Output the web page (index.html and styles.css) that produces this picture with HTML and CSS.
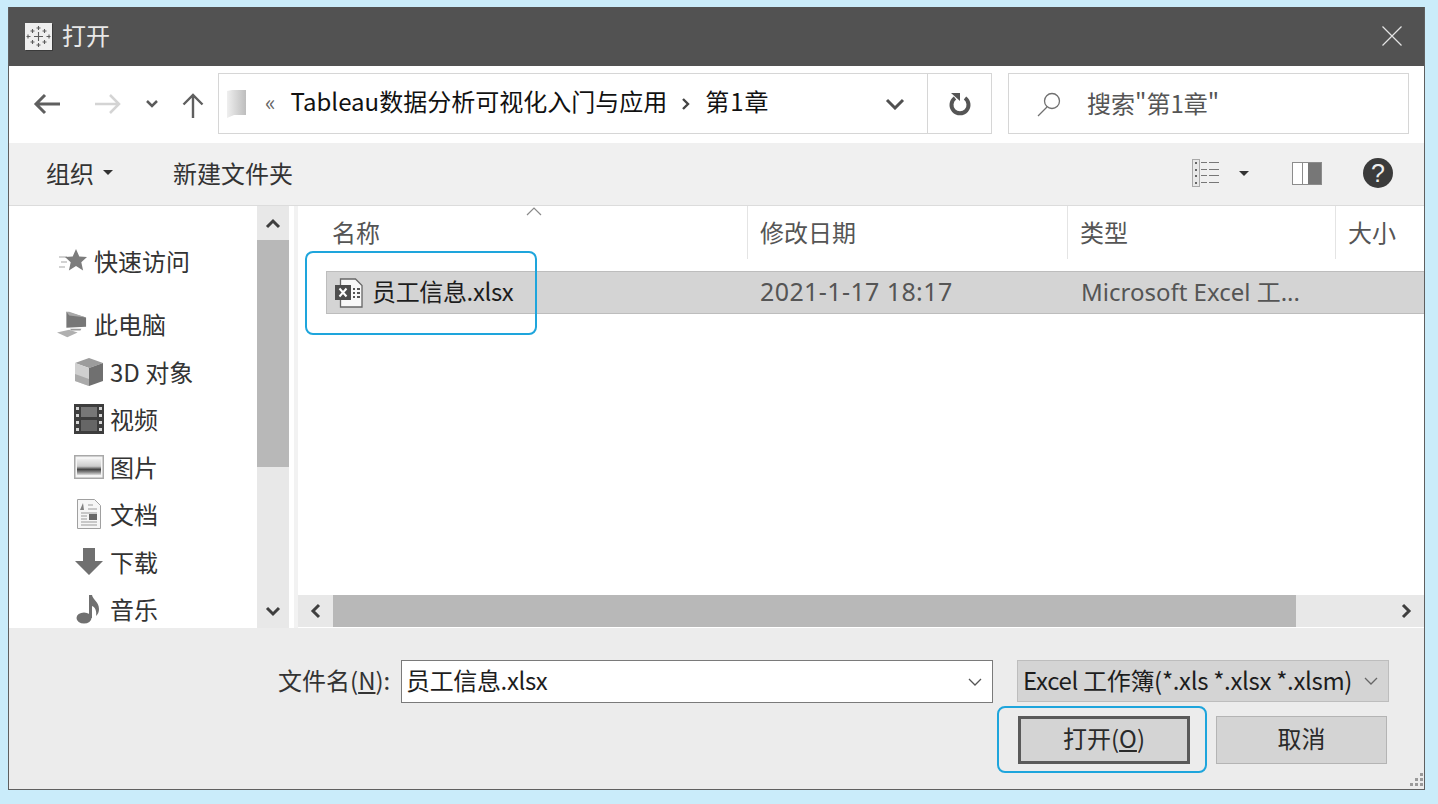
FILE: index.html
```html
<!DOCTYPE html>
<html lang="zh-CN">
<head>
<meta charset="utf-8">
<title>打开</title>
<link rel="stylesheet" href="styles.css">
</head>
<body>
<div class="dialog">
  <header class="titlebar">
    <div class="title-left">
      <span class="app-icon">
        <svg width="27" height="27" viewBox="0 0 27 27"><rect width="27" height="27" fill="#efefef"/><g stroke="#5c5c5c" stroke-width="1.100" fill="none"><path d="M13.500 9v9M9 13.500h9"/><path d="M13.500 3v4M11.500 5h4M13.500 20v4M11.500 22h4M3 11.500v4M1.500 13.500h4M24 11.500v4M21.500 13.500h4"/><path d="M7.500 6v4M5.500 8h4M19.500 6v4M17.500 8h4M7.500 17v4M5.500 19h4M19.500 17v4M17.500 19h4"/></g></svg>
      </span>
      <span class="title-text">打开</span>
    </div>
    <svg class="close" width="22" height="22" viewBox="0 0 22 22"><path d="M1.500 1.500l19 19M20.500 1.500l-19 19" stroke="#e4e4e4" stroke-width="1.200" fill="none"/></svg>
  </header>

  <div class="navbar">
    <div class="nav-buttons">
      <svg class="nav-back" width="28" height="22" viewBox="0 0 28 22"><path d="M27 11H3M12 2l-9 9 9 9" stroke="#5f5f5f" stroke-width="3" fill="none"/></svg>
      <svg class="nav-forward" width="28" height="22" viewBox="0 0 28 22"><path d="M1 11h24M16 2l9 9-9 9" stroke="#d4d4d4" stroke-width="2.500" fill="none"/></svg>
      <svg class="nav-drop" width="14" height="10" viewBox="0 0 14 10"><path d="M2 2l5 5 5-5" stroke="#5a5a5a" stroke-width="2.500" fill="none"/></svg>
      <svg class="nav-up" width="22" height="26" viewBox="0 0 22 26"><path d="M11 26V3M1.500 12.500L11 3l9.500 9.500" stroke="#5f5f5f" stroke-width="2.400" fill="none"/></svg>
    </div>
    <div class="address">
      <svg class="addr-folder" width="20" height="30" viewBox="0 0 20 30"><defs><linearGradient id="fg" x1="0" x2="1" y1="0" y2="0"><stop offset="0" stop-color="#efefef"/><stop offset="1" stop-color="#bdbdbd"/></linearGradient></defs><path d="M0 2l5-1h14v25H7l-7 3z" fill="url(#fg)"/></svg>
      <span class="addr-quote">«</span>
      <span class="addr-path">Tableau数据分析可视化入门与应用</span>
      <svg class="addr-sep" width="10" height="14" viewBox="0 0 10 14"><path d="M2 2l5 5-5 5" stroke="#444" stroke-width="2.400" fill="none"/></svg>
      <span class="addr-path addr-current">第1章</span>
      <span class="addr-fill"></span>
      <span class="addr-drop">
        <svg width="20" height="12" viewBox="0 0 20 12"><path d="M2 2l8 8 8-8" stroke="#505050" stroke-width="3" fill="none"/></svg>
      </span>
      <span class="addr-refresh">
        <svg width="24" height="26" viewBox="0 0 24 26"><path d="M7 7a8.500 8.500 0 1 0 10 0" stroke="#555" stroke-width="4" fill="none"/><path d="M3 2h9v8z" fill="#555"/></svg>
      </span>
    </div>
    <div class="search">
      <svg width="26" height="26" viewBox="0 0 26 26"><circle cx="16" cy="10" r="7.500" stroke="#707070" stroke-width="1.300" fill="none"/><path d="M11 16L2 25" stroke="#707070" stroke-width="1.300" fill="none"/></svg>
      <span class="search-text">搜索"第1章"</span>
    </div>
  </div>

  <div class="toolbar">
    <div class="tool-left">
      <span class="tool-org">组织<i class="caret"></i></span>
      <span class="tool-new">新建文件夹</span>
    </div>
    <div class="tool-right">
      <span class="view-btn">
        <svg width="28" height="28" viewBox="0 0 28 28"><rect x=".5" y=".5" width="7" height="27" fill="#e8e8e8" stroke="#a8a8a8"/><g fill="#666"><rect x="3" y="3" width="2" height="2"/><rect x="3" y="10" width="2" height="2"/><rect x="3" y="16" width="2" height="2"/><rect x="3" y="23" width="2" height="2"/></g><g stroke="#777" stroke-width="1.200"><path d="M9 3.500h6M17 3.500h10M9 10.500h6M17 10.500h10M9 16.500h6M17 16.500h10M9 23.500h6M17 23.500h10"/></g></svg>
        <i class="caret view-caret"></i>
      </span>
      <svg class="pane-btn" width="30" height="23" viewBox="0 0 30 23"><rect x=".5" y=".5" width="29" height="22" fill="#fff" stroke="#8c8c8c"/><rect x="16" y="1" width="13" height="21" fill="#777"/><path d="M10.500 1v21" stroke="#8c8c8c"/></svg>
      <span class="help">?</span>
    </div>
  </div>

  <div class="browser">
    <aside class="sidebar">
      <ul class="tree">
        <li class="tree-row tree-top tree-quick">
          <svg width="28" height="24" viewBox="0 0 28 24"><path d="M0 8h8M2 13h6M0 18h6" stroke="#c4c4c4" stroke-width="1.500"/><path d="M17 0l3.300 7.500 7.700.6-5.700 5.200 1.800 8.200-7.100-4.400-7.100 4.400 1.800-8.200L6 8.100l7.700-.6z" fill="#7c7c7c"/></svg>
          <span>快速访问</span>
        </li>
        <li class="tree-row tree-top tree-pc">
          <svg width="30" height="28" viewBox="0 0 32 28"><path d="M10 1l21 6v10l-21 1z" fill="#777"/><path d="M10 1l3 0 18 6-18-2z" fill="#a8a8a8"/><path d="M14 19h12l-1 2H15z" fill="#9a9a9a"/><path d="M0 23l13-3 9 3-11 5z" fill="#b0b0b0"/></svg>
          <span>此电脑</span>
        </li>
        <li class="tree-row tree-sub">
          <svg width="30" height="30" viewBox="0 0 30 30"><path d="M15 1L29 6 15 11 1 6z" fill="#9c9c9c"/><path d="M1 6l14 5v18L1 24z" fill="#d0d0d0"/><path d="M15 11l14-5v18l-14 5z" fill="#707070"/><path d="M1 17l14 5v7L1 24z" fill="#aaa"/></svg>
          <span>3D 对象</span>
        </li>
        <li class="tree-row tree-sub">
          <svg width="30" height="30" viewBox="0 0 30 30"><rect x="0" y="0" width="30" height="30" fill="#3d3d3d"/><g fill="#d6d6d6"><rect x="2" y="3" width="3" height="3"/><rect x="2" y="10" width="3" height="3"/><rect x="2" y="17" width="3" height="3"/><rect x="2" y="24" width="3" height="3"/><rect x="25" y="3" width="3" height="3"/><rect x="25" y="10" width="3" height="3"/><rect x="25" y="17" width="3" height="3"/><rect x="25" y="24" width="3" height="3"/></g><rect x="7" y="3" width="16" height="10" fill="#777"/><rect x="7" y="16" width="16" height="11" fill="#666"/></svg>
          <span>视频</span>
        </li>
        <li class="tree-row tree-sub">
          <svg width="30" height="24" viewBox="0 0 30 24"><defs><linearGradient id="pg" x1="0" x2="0" y1="0" y2="1"><stop offset="0" stop-color="#eee"/><stop offset=".45" stop-color="#ccc"/><stop offset=".65" stop-color="#444"/><stop offset=".82" stop-color="#888"/><stop offset="1" stop-color="#ddd"/></linearGradient></defs><rect x=".75" y=".75" width="28.500" height="22.500" fill="#f5f5f5" stroke="#a8a8a8" stroke-width="1.500"/><rect x="3" y="4" width="24" height="16" fill="url(#pg)"/></svg>
          <span>图片</span>
        </li>
        <li class="tree-row tree-sub">
          <svg width="30" height="30" viewBox="0 0 30 30"><path d="M3.500.5h17l6 6v23h-23z" fill="#f6f6f6" stroke="#a0a0a0"/><g stroke="#9a9a9a" stroke-width="1.200"><path d="M14 6h5M14 10h9M7 14h16M7 23h16M7 26h16M7 17h6M7 20h6"/></g><path d="M9 4L6 11h4z" fill="#808080"/><rect x="15" y="15" width="8" height="6" fill="#666"/></svg>
          <span>文档</span>
        </li>
        <li class="tree-row tree-sub">
          <svg width="30" height="30" viewBox="0 0 30 30"><path d="M9 1h12v13h8L15 28 1 14h8z" fill="#707070"/></svg>
          <span>下载</span>
        </li>
        <li class="tree-row tree-sub">
          <svg width="30" height="30" viewBox="0 0 30 30"><ellipse cx="10" cy="24" rx="7.500" ry="5.500" fill="#707070"/><path d="M15 1h3c1 5 7 7 7 14 0 3-1 5-3 7 1-5-1-9-4-10v12h-3z" fill="#707070"/></svg>
          <span>音乐</span>
        </li>
      </ul>
      <div class="vscroll">
        <span class="sb-btn"><svg width="16" height="11" viewBox="0 0 16 11"><path d="M2 9l6-6 6 6" stroke="#3f3f3f" stroke-width="3" fill="none"/></svg></span>
        <span class="vthumb"></span>
        <span class="vtrack"></span>
        <span class="sb-btn"><svg width="16" height="11" viewBox="0 0 16 11"><path d="M2 2l6 6 6-6" stroke="#3f3f3f" stroke-width="3" fill="none"/></svg></span>
      </div>
    </aside>

    <main class="files">
      <div class="file-area">
        <div class="columns">
          <span class="col col-name">名称
            <svg class="sort" width="16" height="9" viewBox="0 0 16 9"><path d="M1 8l7-7 7 7" stroke="#8a8a8a" stroke-width="1.200" fill="none"/></svg>
          </span>
          <span class="col col-date">修改日期</span>
          <span class="col col-type">类型</span>
          <span class="col col-size">大小</span>
        </div>
        <div class="file-row">
          <span class="cell-name">
            <svg width="28" height="30" viewBox="0 0 28 30"><path d="M5.500 1h15l6.500 6.500V29H5.500z" fill="#f8f8f8" stroke="#666" stroke-width="1.300"/><rect x="0" y="7" width="16" height="15" fill="#4d4d4d"/><path d="M4.500 10.500l7 8M11.500 10.500l-7 8" stroke="#fff" stroke-width="2"/><path d="M18 11h2M22 11h3M18 15h2M22 15h3M18 19h2M22 19h3" stroke="#555" stroke-width="2"/></svg>
            <span class="file-label">员工信息.xlsx</span>
          </span>
          <span class="cell-date">2021-1-17 18:17</span>
          <span class="cell-type">Microsoft Excel 工...</span>
        </div>
        <div class="highlight-file"></div>
      </div>
      <div class="hscroll">
        <span class="hbtn"><svg width="11" height="16" viewBox="0 0 11 16"><path d="M9 2L3 8l6 6" stroke="#3f3f3f" stroke-width="3" fill="none"/></svg></span>
        <span class="hthumb"></span>
        <span class="hbtn hbtn-right"><svg width="11" height="16" viewBox="0 0 11 16"><path d="M2 2l6 6-6 6" stroke="#3f3f3f" stroke-width="3" fill="none"/></svg></span>
      </div>
    </main>
  </div>

  <footer class="footer">
    <div class="name-row">
      <label class="name-label">文件名(<u>N</u>):</label>
      <div class="name-input">
        <span class="file-label">员工信息.xlsx</span>
        <svg width="14" height="8" viewBox="0 0 14 8"><path d="M1 1l6 6 6-6" stroke="#555" stroke-width="1.300" fill="none"/></svg>
      </div>
      <div class="type-select">
        <span class="type-text">Excel 工作簿(*.xls *.xlsx *.xlsm)</span>
        <svg width="14" height="8" viewBox="0 0 14 8"><path d="M1 1l6 6 6-6" stroke="#666" stroke-width="1.300" fill="none"/></svg>
      </div>
    </div>
    <div class="btn-row">
      <div class="open-wrap">
        <button class="btn btn-open">打开(<u>O</u>)</button>
      </div>
      <button class="btn btn-cancel">取消</button>
    </div>
    <svg class="grip" width="16" height="16" viewBox="0 0 16 16"><g fill="#9a9a9a"><rect x="12" y="1" width="3" height="3"/><rect x="7" y="6" width="3" height="3"/><rect x="12" y="6" width="3" height="3"/><rect x="2" y="11" width="3" height="3"/><rect x="7" y="11" width="3" height="3"/><rect x="12" y="11" width="3" height="3"/></g></svg>
  </footer>
</div>
</body>
</html>
```

FILE: styles.css
```css
* { box-sizing: border-box; }
html, body { height: 100%; }
body {
  margin: 0;
  background: #caecfa;
  padding: 7px 13px 14px 8px;
  font-family: "Noto Sans CJK SC", "Open Sans", sans-serif;
  overflow: hidden;
}
.dialog {
  position: relative;
  height: 783px;
  border: 1px solid #5f5f5f;
  border-top: 0;
  display: flex;
  flex-direction: column;
  background: #fff;
  color: #2a2a2a;
}
.titlebar {
  height: 59px;
  flex: none;
  background: #525252;
  display: flex;
  align-items: center;
  justify-content: space-between;
  padding: 0 21px 0 16px;
  color: #e8e8e8;
}
.title-left { display: flex; align-items: center; gap: 10px; padding-bottom: 1px; }
.app-icon { display: flex; box-shadow: 1px 1px 0 #3a3a3a; }
.title-text { font-size: 24px; line-height: 30px; padding-bottom: 3px; }
.close { margin-top: -1px; }

.navbar {
  height: 77px;
  flex: none;
  background: #fff;
  display: flex;
  align-items: flex-start;
  padding-top: 7px;
}
.nav-buttons {
  width: 209px;
  height: 61px;
  flex: none;
  display: flex;
  align-items: center;
  padding-left: 24px;
}
.nav-back { margin-right: 33px; }
.nav-forward { margin-right: 23px; }
.nav-drop { margin-right: 23px; }
.nav-up { margin-top: 2px; }
.address {
  width: 774px;
  height: 61px;
  flex: none;
  border: 1px solid #d6d6d6;
  display: flex;
  align-items: center;
  padding-left: 8px;
  color: #111;
}
.addr-folder { margin-right: 18px; }
.addr-quote { font-size: 22px; color: #666; margin-right: 15px; line-height: 1; padding-bottom: 6px; }
.addr-path { font-size: 24px; line-height: 32px; padding-bottom: 6px; }
.addr-current { letter-spacing: 1px; }
.addr-sep { margin: 0 14px; }
.addr-fill { flex: 1; }
.addr-drop {
  width: 64px;
  height: 100%;
  display: flex;
  align-items: center;
  justify-content: center;
}
.addr-refresh {
  width: 64px;
  height: 100%;
  border-left: 1px solid #d6d6d6;
  display: flex;
  align-items: center;
  justify-content: center;
}
.search {
  width: 401px;
  height: 61px;
  margin-left: 16px;
  flex: none;
  border: 1px solid #d6d6d6;
  display: flex;
  align-items: center;
  padding-left: 27px;
  gap: 25px;
  color: #555;
}
.search-text { font-size: 24px; padding-bottom: 3px; }

.toolbar {
  height: 63px;
  flex: none;
  background: #f0f0f0;
  border-bottom: 1px solid #dcdcdc;
  display: flex;
  align-items: center;
  justify-content: space-between;
  padding: 0 31px 0 37px;
}
.tool-left { display: flex; align-items: center; gap: 60px; font-size: 24px; color: #333; padding-bottom: 4px; }
.tool-org { display: flex; align-items: center; }
.caret {
  display: inline-block;
  width: 0; height: 0;
  margin-left: 9px;
  border-left: 5px solid transparent;
  border-right: 5px solid transparent;
  border-top: 5px solid #333;
}
.tool-right { display: flex; align-items: center; padding-bottom: 2px; }
.view-btn { display: flex; align-items: center; }
.view-caret { margin-left: 19px; margin-right: 43px; }
.help {
  width: 30px; height: 30px;
  margin-left: 41px;
  border-radius: 50%;
  background: #3b3b3b;
  color: #eee;
  font: 25px/30px "Liberation Sans", sans-serif;
  text-align: center;
}

.browser { height: 422px; flex: none; display: flex; background: #fff; }
.sidebar { width: 280px; flex: none; display: flex; }
.tree {
  list-style: none;
  margin: 0;
  padding: 0;
  flex: none;
  width: 248px;
  overflow: hidden;
  font-size: 24px;
  color: #333;
}
.tree-row { display: flex; align-items: center; height: 47.500px; }
.tree-row span { line-height: 32px; white-space: nowrap; }
.tree-top { padding-left: 50px; gap: 7px; }
.tree-top svg { width: 28px; }
.tree-quick { margin-top: 31px; }
.tree-pc { margin-top: 16px; }
.tree-pc svg { width: 30px; margin-left: -2px; }
.tree-sub { padding-left: 65px; gap: 6px; }
.tree-sub svg { width: 30px; flex: none; }
.vscroll {
  width: 32px;
  flex: none;
  display: flex;
  flex-direction: column;
  background: #e8e8e8;
}
.sb-btn { height: 34px; flex: none; display: flex; align-items: center; justify-content: center; }
.vthumb { height: 227px; flex: none; background: #b8b8b8; }
.vtrack { flex: 1; }

.files {
  flex: 1;
  min-width: 0;
  display: flex;
  flex-direction: column;
  border-left: 4px solid #f2f2f2;
  margin-left: 5px;
}
.file-area { position: relative; flex: 1; min-height: 0; }
.columns {
  height: 53px;
  display: flex;
  align-items: flex-end;
  font-size: 24px;
  color: #555;
}
.col { position: relative; display: block; height: 53px; padding-top: 10px; line-height: 32px; white-space: nowrap; padding-left: 12px; border-right: 1px solid #e4e4e4; }
.col-name { width: 450px; padding-left: 34px; }
.col-date { width: 320px; }
.col-type { width: 268px; }
.col-size { flex: 1; border-right: 0; overflow: hidden; }
.sort { position: absolute; left: 228px; top: 1px; }
.file-row {
  height: 43px;
  margin: 12px 0 0 28px;
  background: #d4d4d4;
  border: 1px solid #bdbdbd;
  border-right: 0;
  display: flex;
  align-items: center;
  font-size: 24px;
  color: #555;
}
.cell-name { width: 433px; display: flex; align-items: center; gap: 9px; padding-left: 8px; color: #1d1d1d; }
.cell-name span { line-height: 32px; padding-bottom: 3px; }
.file-label { letter-spacing: -.35px; }
.cell-date { width: 321px; font-family: "Noto Sans", "Noto Sans CJK SC", sans-serif; font-size: 25px; letter-spacing: .4px; padding-bottom: 3px; }
.cell-type { white-space: nowrap; font-family: "Noto Sans", "Noto Sans CJK SC", sans-serif; padding-bottom: 5px; }
.highlight-file {
  position: absolute;
  left: 7px;
  top: 45px;
  width: 232px;
  height: 84px;
  border: 2px solid #1ea5dc;
  border-radius: 8px;
}
.hscroll { height: 32px; flex: none; display: flex; background: #e8e8e8; margin-bottom: 1px; }
.hbtn { width: 35px; flex: none; display: flex; align-items: center; justify-content: center; }
.hbtn-right { width: 128px; justify-content: flex-end; padding-right: 12px; }
.hthumb { flex: 1; background: #b8b8b8; }

.footer {
  position: relative;
  flex: 1;
  background: #ececec;
  padding-top: 32px;
}
.name-row { display: flex; align-items: flex-start; height: 44px; padding-left: 269px; }
.name-label { font-size: 24px; line-height: 40px; color: #333; width: 123px; white-space: nowrap; }
.name-input {
  width: 592px;
  height: 43px;
  border: 1px solid #7a7a7a;
  background: #fff;
  display: flex;
  align-items: center;
  justify-content: space-between;
  padding: 0 10px 0 4px;
  font-size: 24px;
  color: #1d1d1d;
}
.name-input .file-label { padding-bottom: 4px; }
.type-select {
  width: 372px;
  height: 42px;
  margin-left: 24px;
  background: #d4d4d4;
  border: 1px solid #bdbdbd;
  display: flex;
  align-items: center;
  justify-content: space-between;
  padding: 0 10px 0 5px;
  font-size: 24px;
  color: #1d1d1d;
}
.type-text { white-space: nowrap; letter-spacing: -.32px; padding-bottom: 3px; }
.btn-row { display: flex; justify-content: flex-end; margin-top: 12px; padding-right: 37px; gap: 26px; }
.btn {
  height: 48px;
  font: 24px/1 "Noto Sans CJK SC", sans-serif;
  color: #2a2a2a;
  background: #d4d4d4;
  padding: 0 0 4px;
}
.btn-open { width: 172px; border: 3px solid #5a5a5a; }
.btn-cancel { width: 171px; border: 1px solid #b4b4b4; }
.open-wrap {
  border: 2px solid #1ea5dc;
  border-radius: 8px;
  padding: 8px 15px 7px 19px;
  margin: -10px -17px -9px 0;
}
.grip { position: absolute; right: 0; bottom: 1px; }
```
